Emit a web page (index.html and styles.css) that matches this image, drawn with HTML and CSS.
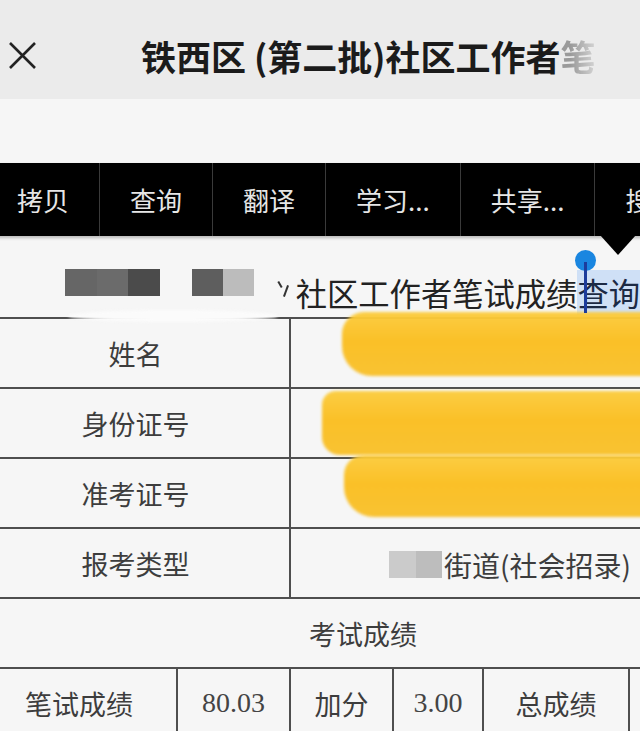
FILE: index.html
```html
<!DOCTYPE html>
<html lang="zh">
<head>
<meta charset="utf-8">
<link rel="stylesheet" href="styles.css">
</head>
<body>
<header class="topbar">
  <svg class="close" width="29" height="29" viewBox="0 0 29 29"><path d="M2 2 L27 27 M27 2 L2 27" stroke="#222" stroke-width="2.6" fill="none"/></svg>
  <h1 class="title">铁西区 (第二批)社区工作者<span class="fade">笔</span></h1>
</header>

<main class="page">
  <div class="doc-title">
    <span class="blk b1"></span><span class="blk b2"></span><span class="blk b3"></span>
    <span class="blk b4 gap"></span><span class="blk b5"></span>
    <span class="frag"><i class="f1"></i><i class="f2"></i></span>
    <span class="dtext">社区工作者笔试成绩<span class="sel">查询</span></span>
  </div>

  <table class="grid">
    <colgroup>
      <col class="c1"><col class="c2"><col class="c3"><col class="c4"><col class="c5"><col class="c6">
    </colgroup>
    <tr><td colspan="2">姓名</td><td colspan="4"></td></tr>
    <tr><td colspan="2">身份证号</td><td colspan="4"></td></tr>
    <tr><td colspan="2">准考证号</td><td colspan="4"></td></tr>
    <tr><td colspan="2">报考类型</td><td colspan="4" class="val"><span class="mask"><span class="m1"></span><span class="m2"></span></span><span class="street">街道(社会招录)</span></td></tr>
    <tr><td colspan="6">考试成绩</td></tr>
    <tr><td>笔试成绩</td><td class="num">80.03</td><td>加分</td><td class="num">3.00</td><td>总成绩</td><td></td></tr>
  </table>
</main>

<div class="smear"></div>
<div class="mark mk1"></div>
<div class="mark mk2"></div>
<div class="mark mk3"></div>

<div class="handle"><span class="dot"></span><span class="stem"></span></div>

<nav class="menu">
  <span class="item">拷贝</span>
  <span class="item">查询</span>
  <span class="item">翻译</span>
  <span class="item">学习...</span>
  <span class="item">共享...</span>
  <span class="item">搜</span>
</nav>
<div class="menu-tip"></div>
</body>
</html>
```

FILE: styles.css
```css
html, body {
  margin: 0;
  padding: 0;
}
body {
  width: 640px;
  height: 731px;
  overflow: hidden;
  position: relative;
  background: #f6f6f6;
  font-family: "Noto Sans CJK SC", "Noto Sans", sans-serif;
}
.topbar {
  height: 99px;
  box-sizing: border-box;
  padding-top: 11px;
  background: #ebebeb;
  display: flex;
  align-items: center;
}
.close {
  margin-left: 8px;
  flex: none;
}
.title {
  margin: 0 0 0 104px;
  font-size: 35px;
  font-weight: 700;
  color: #1b1b1b;
  white-space: nowrap;
}
.fade {
  color: #9a9a9a;
  -webkit-mask-image: linear-gradient(90deg, #000 30%, rgba(0,0,0,0.3) 100%);
  mask-image: linear-gradient(90deg, #000 30%, rgba(0,0,0,0.3) 100%);
}
.page {
  padding-top: 168px;
}
.doc-title {
  height: 50px;
  display: flex;
  align-items: center;
  white-space: nowrap;
}
.blk {
  display: block;
  height: 27px;
  margin-top: -20px;
}
.b1 { width: 33px; margin-left: 65px; background: #666; }
.b2 { width: 32px; background: #6b6b6b; }
.b3 { width: 32px; background: #4b4b4b; }
.b4 { width: 32px; background: #5e5e5e; }
.gap { margin-left: 32px; }
.b5 { width: 32px; background: #bcbcbc; }
.frag {
  position: relative;
  display: block;
  width: 12px;
  height: 20px;
  margin-left: 24px;
  margin-top: -6px;
}
.f1, .f2 {
  position: absolute;
  background: #333;
  display: block;
}
.f1 { left: 1px; top: 2px; width: 2px; height: 7px; transform: rotate(-30deg); }
.f2 { left: 7px; top: 6px; width: 2px; height: 12px; transform: rotate(20deg); }
.dtext {
  font-size: 31.3px;
  color: #222;
  margin-left: 6px;
}
.sel {
  background: #cfe0f6;
  color: #1c2a44;
}
.grid {
  margin-left: -20px;
  width: 764px;
  table-layout: fixed;
  border-collapse: collapse;
}
.c1 { width: 196px; }
.c2 { width: 113px; }
.c3 { width: 103px; }
.c4 { width: 90px; }
.c5 { width: 146px; }
.c6 { width: 116px; }
.grid td {
  border: 2px solid #4f4f4f;
  height: 68px;
  padding: 0;
  text-align: center;
  vertical-align: middle;
  font-size: 27px;
  color: #3d3d3d;
  white-space: nowrap;
}
.grid td.num {
  font-family: "Liberation Serif", serif;
  font-size: 28px;
  color: #444;
}
.grid td.val {
  text-align: left;
  padding-left: 98px;
}
.mask {
  display: inline-flex;
  vertical-align: middle;
  margin-right: 2px;
}
.m1 { width: 27px; height: 27px; background: #cbcbcb; }
.m2 { width: 26px; height: 27px; background: #bdbdbd; }
.street {
  font-size: 28px;
  vertical-align: middle;
}
.smear {
  position: absolute;
  left: 68px;
  top: 310px;
  width: 210px;
  height: 12px;
  background: #fbfbfb;
  border-radius: 50%;
  filter: blur(1.5px);
}
.mark {
  position: absolute;
  background: linear-gradient(180deg, #fccc3d 0%, #fbbe1f 45%, #f9c02a 100%);
  filter: blur(1.5px);
  opacity: 0.96;
}
.mk1 { left: 342px; top: 312px; width: 320px; height: 64px; border-radius: 22px 0 0 30px; }
.mk2 { left: 322px; top: 391px; width: 340px; height: 64px; border-radius: 14px 0 0 18px; }
.mk3 { left: 344px; top: 455px; width: 320px; height: 62px; border-radius: 20px 0 0 30px; }
.handle {
  position: absolute;
  left: 575px;
  top: 250px;
  width: 21px;
  height: 64px;
}
.dot {
  position: absolute;
  left: 0;
  top: 0;
  width: 21px;
  height: 21px;
  border-radius: 50%;
  background: #1a86e0;
}
.stem {
  position: absolute;
  left: 9px;
  top: 12px;
  width: 3px;
  height: 51px;
  background: #1c3c9c;
}
.menu {
  position: absolute;
  left: -13px;
  top: 163px;
  height: 73px;
  width: 680px;
  background: #000;
  display: flex;
  align-items: stretch;
  box-shadow: 0 2px 3px rgba(0,0,0,0.25);
}
.item {
  display: flex;
  align-items: center;
  padding: 0 30px;
  font-size: 26px;
  color: #e6e6e6;
  border-right: 1px solid #3a3a3a;
  white-space: nowrap;
  flex: none;
}
.menu-tip {
  position: absolute;
  left: 600px;
  top: 235px;
  width: 0;
  height: 0;
  border-left: 18px solid transparent;
  border-right: 18px solid transparent;
  border-top: 20px solid #000;
}
```
